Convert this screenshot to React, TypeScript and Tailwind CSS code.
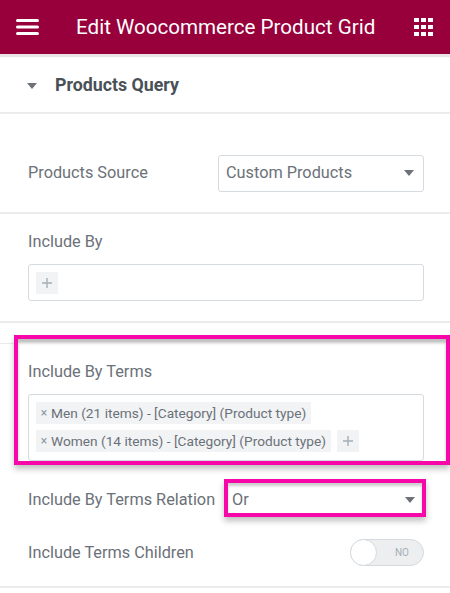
export default function App() {
  const F = { fontFamily: "Roboto, 'Liberation Sans', sans-serif" };
  const Caret = () => <span className="w-0 h-0 border-x-[5.5px] border-x-transparent border-t-[6px] border-t-[#6d7278]" />;
  const Tag = ({ t }: { t: string }) => (
    <span className="h-[22px] flex items-center bg-[#f1f3f5] pl-[3px] pr-[5px] text-[13.7px] text-[#6b7178] whitespace-nowrap">
      <span className="w-[10px] text-[12px] text-[#8f9aa3] mr-[2px] text-center">×</span>{t}
    </span>
  );
  const Plus = () => (
    <span className="w-[22px] h-[22px] bg-[#f1f3f5] flex items-center justify-center">
      <svg width="12" height="12" viewBox="0 0 12 12"><path d="M6 1v10M1 6h10" stroke="#a4afb7" strokeWidth="1.4" /></svg>
    </span>
  );
  return (
    <div style={F} className="relative w-[450px] h-[593px] overflow-hidden bg-white text-[#6b7178] flex flex-col">
      <header className="h-[54px] shrink-0 bg-[#98003c] shadow-[0_3px_1px_#e8e4e8] flex items-center text-white">
        <svg className="ml-[16px]" width="23" height="18" viewBox="0 0 23 18"><path d="M1.5 2.5h20M1.5 9h20M1.5 15.5h20" stroke="#fff" strokeWidth="3" strokeLinecap="round" /></svg>
        <div className="ml-[37px] w-[300px] text-[20.6px] leading-[27px] pt-[1px] font-normal whitespace-nowrap">Edit Woocommerce Product Grid</div>
        <div className="ml-[38px] grid grid-cols-3 gap-[2.5px]">
          {Array.from({ length: 9 }).map((_, i) => <span key={i} className="w-[4.5px] h-[4.5px] bg-white" />)}
        </div>
      </header>
      <section className="h-[60px] shrink-0 border-b-2 border-[#e9ebed] flex items-center pl-[27px] pt-[5px]">
        <Caret />
        <span className="ml-[18px] text-[17.8px] font-bold text-[#495157]">Products Query</span>
      </section>
      <section className="h-[100px] shrink-0 border-b-2 border-[#e9ebed] flex items-center justify-between pl-[28px] pr-[26px] pt-[20px]">
        <span className="text-[16.3px] pt-[1px]">Products Source</span>
        <div className="w-[206px] h-[37px] border border-[#d5dadf] rounded-[3px] flex items-center justify-between pl-[7px] pr-[9px]">
          <span className="text-[16.3px] pt-[1px]">Custom Products</span>
          <Caret />
        </div>
      </section>
      <section className="h-[109px] shrink-0 border-b-2 border-[#e9ebed] pl-[28px] pr-[26px] pt-[16px]">
        <div className="text-[16.3px] leading-[24px]">Include By</div>
        <div className="mt-[10px] h-[37px] border border-[#d5dadf] rounded-[3px] flex items-center pl-[7px]"><Plus /></div>
      </section>
      <section className="h-[142px] shrink-0 pl-[28px] pr-[26px] pt-[37px]">
        <div className="text-[16.3px] leading-[24px]">Include By Terms</div>
        <div className="mt-[10px] h-[67px] border border-[#d5dadf] rounded-[3px] pl-[7px] pt-[7px] flex flex-col gap-[6px]">
          <div className="flex"><Tag t="Men (21 items) - [Category] (Product type)" /></div>
          <div className="flex gap-[6px]"><Tag t="Women (14 items) - [Category] (Product type)" /><Plus /></div>
        </div>
      </section>
      <section className="h-[39px] shrink-0 flex items-center justify-between pl-[28px] pr-[26px] mt-[14px] pt-[3px]">
        <span className="text-[16.3px] whitespace-nowrap">Include By Terms Relation</span>
        <div className="w-[192px] flex items-center justify-between pr-[9px]">
          <span className="text-[16.3px]">Or</span>
          <Caret />
        </div>
      </section>
      <section className="h-[33px] shrink-0 flex items-center justify-between pl-[28px] pr-[26px] mt-[18px]">
        <span className="text-[16.3px] pt-[2px]">Include Terms Children</span>
        <div className="relative w-[74px] h-[27px] rounded-full bg-[#eceeef] border border-[#d5dadf] flex items-center justify-end pr-[14px]">
          <span className="text-[10px] text-[#a4afb7]">NO</span>
          <span className="absolute -left-px -top-px w-[27px] h-[27px] rounded-full bg-white border border-[#d5dadf]" />
        </div>
      </section>
      <div className="mt-[17px] border-b-2 border-[#e9ebed]" />

      <div className="absolute left-0 top-[343px] w-[16px] h-px bg-[#e9ebed]" />
      <div className="absolute left-[14px] top-[335px] w-[436px] h-[130px] border-[4px] border-[#f706a8] shadow-[0_4px_6px_rgba(0,0,0,0.25),inset_0_4px_3px_rgba(0,0,0,0.25)]" />
      <div className="absolute left-[224px] top-[479px] w-[202px] h-[38px] border-[4px] border-[#f706a8] shadow-[0_4px_6px_rgba(0,0,0,0.25),inset_0_3px_3px_rgba(0,0,0,0.2)]" />
    </div>
  );
}
